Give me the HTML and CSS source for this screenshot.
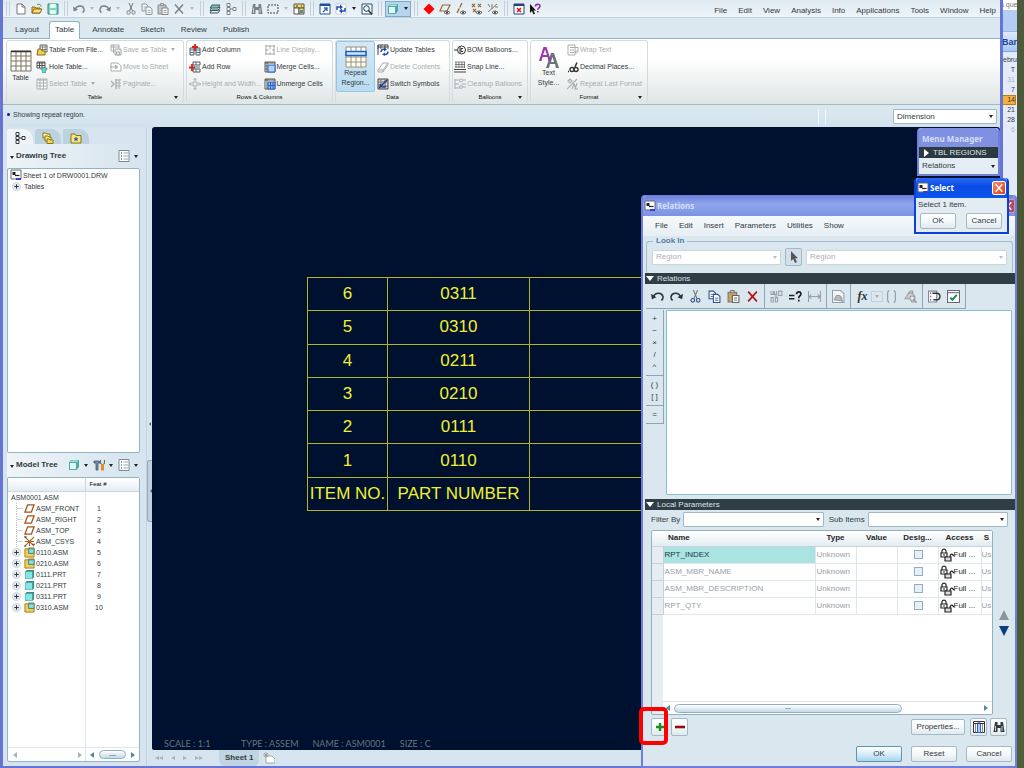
FILE: index.html
```html
<!DOCTYPE html>
<html lang="en">
<head>
    <meta charset="UTF-8">
    <meta name="viewport" content="width=device-width, initial-scale=1.0">
    <title>DRW0001 - Repeat Region Relations</title>
    <link rel="stylesheet" href="styles.css">
</head>
<body>
    <!-- icon sprite -->
    <svg class="sprite" aria-hidden="true">
        <symbol id="i-new" viewBox="0 0 12 12"><path d="M2 1h5l3 3v7H2z" fill="#fff" stroke="#777"/><path d="M7 1v3h3" fill="none" stroke="#777"/></symbol>
        <symbol id="i-open" viewBox="0 0 12 12"><path d="M1 10V4h3l1 1h4v5z" fill="#e8c64a" stroke="#8a6a10"/><path d="M1 10l2-4h8l-2 4z" fill="#f8e27a" stroke="#8a6a10"/><path d="M6 2c2-1.500 4-.5 4 1.500" fill="none" stroke="#3c8a3c"/></symbol>
        <symbol id="i-save" viewBox="0 0 12 12"><path d="M1 1h10v10H1z" fill="#7fd0c8" stroke="#3d7f86"/><path d="M3 1h6v4H3zM3 7h6v4H3z" fill="#f6fbfb" stroke="#6fa"  stroke-width=".4"/></symbol>
        <symbol id="i-undo" viewBox="0 0 12 12"><path d="M2 6.500C4 2 10 2 11 6c.3 1.800-.5 3-1.500 3.500" fill="none" stroke="currentColor" stroke-width="1.400"/><path d="M0 3.500l.8 5 4.200-1.800z" fill="currentColor"/></symbol>
        <symbol id="i-redo" viewBox="0 0 12 12"><path d="M10 6.500C8 2 2 2 1 6c-.3 1.800.5 3 1.500 3.500" fill="none" stroke="currentColor" stroke-width="1.400"/><path d="M12 3.500l-.8 5L7 6.700z" fill="currentColor"/></symbol>
        <symbol id="i-cut" viewBox="0 0 12 12"><path d="M4 0l3.500 8M8 0L4.500 8" fill="none" stroke="#777"/><circle cx="3.500" cy="9.500" r="1.700" fill="none" stroke="currentColor"/><circle cx="8.500" cy="9.500" r="1.700" fill="none" stroke="currentColor"/></symbol>
        <symbol id="i-copy" viewBox="0 0 12 12"><path d="M1 1h4l2 2v5H1z" fill="#fff" stroke="currentColor"/><path d="M5 4h4l2 2v5.500H5z" fill="#fff" stroke="currentColor"/><path d="M2.500 4h3M2.500 6h2M6.500 7.500h3M6.500 9.500h3" stroke="currentColor" stroke-width=".8"/></symbol>
        <symbol id="i-paste" viewBox="0 0 12 12"><path d="M1 2h8v9H1z" fill="var(--board,#bbb)" stroke="#777"/><path d="M3.500.5h3v2h-3z" fill="#ddd" stroke="#777"/><path d="M5 5h6v6.500H5z" fill="#fff" stroke="#666"/><path d="M6.500 7.500h3M6.500 9.500h3" stroke="#888"/></symbol>
        <symbol id="i-x" viewBox="0 0 12 12"><path d="M2 1.500l8 9M10 1.500l-8 9" stroke="currentColor" stroke-width="1.500"/></symbol>
        <symbol id="i-layers" viewBox="0 0 12 12"><path d="M1 10l2-3h8l-2 3zM1 7.500l2-3h8l-2 3z" fill="#d7efe8" stroke="#456"/><path d="M1 5l2-3h8L9 5z" fill="#6fc9b5" stroke="#456"/></symbol>
        <symbol id="i-nodes" viewBox="0 0 12 12"><path d="M3.500 3v6M4.500 6H8" stroke="currentColor"/><path d="M2 .5h3v3H2zM2 4.500h3v3H2zM2 8.500h3v3H2zM8 4.500h3v3H8z" fill="#fff" stroke="currentColor"/></symbol>
        <symbol id="i-find" viewBox="0 0 12 12"><path d="M2 1h2.500v3h3V1H10l1.500 10H7.500V7h-3v4H.5z" fill="currentColor"/><path d="M2.500 5v5M9 5v5" stroke="#ccc"/></symbol>
        <symbol id="i-marquee" viewBox="0 0 12 12"><path d="M1 2h10v8H1z" fill="none" stroke="#444" stroke-dasharray="2 1"/></symbol>
        <symbol id="i-model" viewBox="0 0 12 12"><path d="M1 1h10v4H1z" fill="#f5df5a" stroke="#555"/><path d="M1 5h5v6H1z" fill="#fff" stroke="#555"/><path d="M6 5h5v6H6z" fill="#f0d850" stroke="#555"/><path d="M3 3h2M8 3h1" stroke="#333"/><path d="M7 7h3v3H7z" fill="#58b"/></symbol>
        <symbol id="i-window" viewBox="0 0 12 12"><path d="M1 1h10v10H1z" fill="#fff" stroke="#224e9a"/><path d="M1 2h10" stroke="#224e9a" stroke-width="2"/><path d="M4 9l4-4M8 8V5H5" fill="none" stroke="#2563c4" stroke-width="1.300"/></symbol>
        <symbol id="i-refresh" viewBox="0 0 12 12"><path d="M1 1h10v10H1z" fill="#fff" stroke="#ccd"/><path d="M2 7V4h3M10 5v3H7" fill="none" stroke="#1d4fb4" stroke-width="1.500"/><path d="M5 1.500l3 2.500-3 2.500zM7 5.500L4 8l3 2.500z" fill="#1d4fb4"/></symbol>
        <symbol id="i-zoom" viewBox="0 0 12 12"><path d="M1 1h10v10H1z" fill="#fff" stroke="#224e7a"/><circle cx="5.500" cy="5.500" r="2.800" fill="#dff" stroke="#333"/><path d="M7.500 7.500l3.500 4" stroke="#333" stroke-width="1.500"/></symbol>
        <symbol id="i-cube" viewBox="0 0 12 12"><path d="M1 3.500L3 1h8v7l-2 2.500H1z" fill="#4fa9a6"/><path d="M1.500 3.500h7v7h-7z" fill="#d8fbf8" stroke="#4e8a8a" stroke-width=".7"/><path d="M2 3l1.500-1.500h7L9 3z" fill="#a5ebe6"/></symbol>
        <symbol id="i-diamond" viewBox="0 0 12 12"><path d="M6 .5L11.500 6 6 11.500.5 6z" fill="#f00"/></symbol>
        <symbol id="i-dplane" viewBox="0 0 12 12"><path d="M3.500 2H11L8 8H1z" fill="none" stroke="#9a6a30" stroke-width="1.200"/><path d="M5 9.500c2-2 4-2 6 0-2 2-4 2-6 0z" fill="#eee" stroke="#555"/><circle cx="8" cy="9.500" r="1" fill="#333"/></symbol>
        <symbol id="i-daxis" viewBox="0 0 12 12"><path d="M7 0L2 10" stroke="#9a6a30" stroke-width="1.300" stroke-dasharray="5 1"/><path d="M5 9.500c2-2 4-2 6 0-2 2-4 2-6 0z" fill="#eee" stroke="#555"/><circle cx="8" cy="9.500" r="1" fill="#333"/></symbol>
        <symbol id="i-dpoint" viewBox="0 0 12 12"><path d="M1 1l3 3M4 1L1 4M7 1l3 3M10 1L7 4M2 6l3 3M5 6L2 9" stroke="#9a6a30" stroke-width="1.200"/><path d="M5 9.500c2-2 4-2 6 0-2 2-4 2-6 0z" fill="#eee" stroke="#555"/><circle cx="8" cy="9.500" r="1" fill="#333"/></symbol>
        <symbol id="i-dcsys" viewBox="0 0 12 12"><path d="M10 1L1 9M5 1v5M1 1l2 3M8 4h3" stroke="#8a7a60"/><path d="M5 9.500c2-2 4-2 6 0-2 2-4 2-6 0z" fill="#eee" stroke="#555"/><circle cx="8" cy="9.500" r="1" fill="#333"/></symbol>
        <symbol id="i-close" viewBox="0 0 12 12"><path d="M1 1h10v10H1z" fill="#fff" stroke="#27407c"/><path d="M1 2h10" stroke="#27407c" stroke-width="2"/><path d="M4 5l4 4M8 5L4 9" stroke="#d11" stroke-width="1.500"/></symbol>
        <symbol id="i-help" viewBox="0 0 12 12"><path d="M1 1v9l2-2 1.500 3.500 1.500-.7L4.500 7.500H7z" fill="#111"/><path d="M6.500 3.500C6.500.5 11 .5 11 3c0 2-2.200 1.800-2.200 3.800M8.800 8v1.500" fill="none" stroke="#8a2aa0" stroke-width="1.600"/></symbol>

        <symbol id="i-grid" viewBox="0 0 22 22"><path d="M1 1h20v20H1z" fill="#fffdf4"/><path d="M1 6h20M1 11h20M1 16h20M1 21h20M6 1v20M11 1v20M16 1v20M21 1v20M1 1v20M1 1h20" stroke="#77756a"/><path d="M1 1.500h20" stroke="#333" stroke-width="1.500"/></symbol>
        <symbol id="i-region" viewBox="0 0 22 22"><path d="M1 1h20v20H1z" fill="#fffdf4"/><path d="M1 1h20M1 11h20M1 16h20M1 21h20M6 1v20M11 1v20M16 1v20M21 1v20M1 1v20" stroke="#9a9376"/><path d="M1 5.500h20v4H1z" fill="#cfe8ff" stroke="#1c62c8" stroke-width="1.500"/></symbol>
        <symbol id="i-style" viewBox="0 0 22 22"><path d="M8 22l5-15h3l5 15h-3l-1-4h-5l-1 4zM13 16h3l-1.500-5z" fill="#6b737a"/><path d="M1 15L5.500 1h3L13 15h-2.500l-1-4h-5l-1 4zM5 9h4L7 3.500z" fill="#9a35b0"/></symbol>
        <symbol id="i-tfile" viewBox="0 0 12 12"><path d="M4 1h7v7H4z" fill="#fff" stroke="#666"/><path d="M4 3h7M4 5.500h7M6.500 1v7M9 1v7" stroke="#666" stroke-width=".7"/><path d="M1 11l1-6h3l1 2h3v4z" fill="#f2cf4e" stroke="#8a6a10"/></symbol>
        <symbol id="i-thole" viewBox="0 0 12 12"><path d="M1 1h8v6H1z" fill="#fff" stroke="#555"/><path d="M1 2h8M1 4.500h8M3.500 1v6M6 1v6" stroke="#555"/><path d="M5 7h6v2H9.500v3h-3V9H5z" fill="#63d6c9" stroke="#3a8a88" stroke-width=".6"/></symbol>
        <symbol id="i-tsel" viewBox="0 0 12 12"><path d="M1 1h10v10H1z" fill="#fff" stroke="currentColor"/><path d="M1 2h10M1 5h10M1 8h10M4 1v10M7.500 1v10" stroke="currentColor"/></symbol>
        <symbol id="i-tsave" viewBox="0 0 12 12"><path d="M1 1h8v6H1zM1 3h8M3.500 1v8" fill="none" stroke="currentColor"/><path d="M5 5h6v6H5zM6.500 8h3v3h-3z" fill="#eee" stroke="currentColor"/></symbol>
        <symbol id="i-move" viewBox="0 0 12 12"><path d="M1 2h7l3 3v5H1z" fill="#fff" stroke="currentColor"/><path d="M0 6h6" stroke="currentColor"/><path d="M5 3.500L8.500 6 5 8.500z" fill="currentColor"/></symbol>
        <symbol id="i-pag" viewBox="0 0 12 12"><path d="M1 3l3 3-3 3M6 1v10" fill="none" stroke="currentColor" stroke-width="1.400"/><path d="M6 2h5M6 5h5M6 8h5M9 1v10" stroke="currentColor"/></symbol>
        <symbol id="i-addcol" viewBox="0 0 12 12"><path d="M1 4h4v7H1zM7 4h4v7H7z" fill="#fff" stroke="#555"/><path d="M1 6h4M1 8.500h4M7 6h4M7 8.500h4" stroke="#37a" /><path d="M6 0v7M3 3h6" stroke="#d21" stroke-width="1.800"/></symbol>
        <symbol id="i-addrow" viewBox="0 0 12 12"><path d="M4 1h7v3H4zM4 8h7v3H4z" fill="#fff" stroke="#555"/><path d="M7 1v3M7 8v3M5 6h6" stroke="#37a"/><path d="M3 3v7M0 6.500h6" stroke="#d21" stroke-width="1.800"/></symbol>
        <symbol id="i-size" viewBox="0 0 12 12"><path d="M4 4h4v4H4zM6 0v3M6 9v3M0 6h3M9 6h3M4.500 2L6 .5 7.500 2M4.500 10L6 11.500 7.500 10M2 4.500L.5 6 2 7.500M10 4.500L11.500 6 10 7.500" fill="none" stroke="currentColor"/></symbol>
        <symbol id="i-lined" viewBox="0 0 12 12"><path d="M1 2h10M1 10h10M2 1v10M10 1v10M6 1v4M1 6h4M8 6h3M6 8v3" stroke="currentColor"/></symbol>
        <symbol id="i-merge" viewBox="0 0 12 12"><path d="M1 1h10v10H1z" fill="#fff" stroke="#555"/><path d="M1 2h10M3 1v10M1 5h2M1 8h2" stroke="#555"/><path d="M4 4h7v7H4z" fill="#b6d2fa" stroke="#2b63c4"/></symbol>
        <symbol id="i-unmerge" viewBox="0 0 12 12"><path d="M1 1h10v10H1z" fill="#fff" stroke="#555"/><path d="M1 2h10M3 1v10" stroke="#555"/><path d="M4 4h7v7H4zM4 7.500h7M6.500 4v7M9 4v7" fill="#8fb8f6" stroke="#2b63c4"/></symbol>
        <symbol id="i-update" viewBox="0 0 12 12"><path d="M1 5V1h10v4M1 3h10M4 1v4M8 1v4M1 1v10" fill="none" stroke="#444"/><path d="M4 8c0-2 1.500-3 3-2.500M11 7.500c0 2-1.500 3-3 3" fill="none" stroke="#1d4fb4" stroke-width="1.500"/><path d="M7 3.500l3 2-3 2zM8 8.500l-3 2 3 1.500z" fill="#1d4fb4"/></symbol>
        <symbol id="i-erase" viewBox="0 0 12 12"><path d="M1 9l5-7h5L6 9zM1 9v2h5l5-7V2M6 9v2" fill="#fff" stroke="currentColor"/></symbol>
        <symbol id="i-switch" viewBox="0 0 12 12"><path d="M1 1h10v10H1z" fill="#cfd6de" stroke="#444"/><path d="M1 4h10M1 8h10M4 1v10M8 1v10" stroke="#777"/><path d="M2 10l8-8M3 6c0 3 4 4 6 2" fill="none" stroke="#24367e" stroke-width="1.500"/></symbol>
        <symbol id="i-bom" viewBox="0 0 12 12"><path d="M0 6h3" stroke="#333"/><circle cx="7.500" cy="6" r="4" fill="#fff" stroke="#333"/><path d="M9 4.500H7v3h2M6 3v6" fill="none" stroke="#333"/></symbol>
        <symbol id="i-snap" viewBox="0 0 12 12"><path d="M1 1h10M1 3.500h10M1 6h10M2 1v6M5 1v6M8 1v6M10.500 1v6" stroke="#666" stroke-width=".8"/><path d="M0 8.500h12M0 11h12" stroke="#444"/></symbol>
        <symbol id="i-clean" viewBox="0 0 12 12"><path d="M1 1v10M1 2h4M1 6h4M1 10h4" stroke="currentColor"/><circle cx="7" cy="2.500" r="1.500" fill="none" stroke="currentColor"/><circle cx="7" cy="9" r="1.500" fill="none" stroke="currentColor"/><path d="M8 6h4M9 2h3M9 9h3" stroke="currentColor"/></symbol>
        <symbol id="i-wrap" viewBox="0 0 12 12"><path d="M1 1h7v10H1zM3 3.500h6M3 6h4M3 8.500h4" fill="none" stroke="currentColor"/><path d="M8 3.500h3V8H8M9.500 6.500L8 8l1.500 1.500" fill="none" stroke="currentColor"/></symbol>
        <symbol id="i-dec" viewBox="0 0 12 12"><circle cx="5" cy="8.500" r="2" fill="none" stroke="#333" stroke-width="1.400"/><circle cx="9" cy="8.500" r="2" fill="none" stroke="#333" stroke-width="1.400"/><path d="M8 6l2-4.500M1 10.500h1" stroke="#333" stroke-width="1.500"/></symbol>
        <symbol id="i-fmt" viewBox="0 0 12 12"><path d="M0 11L10 1M1 3l2-2 2 2-2 2zM5 11l2-5 2 5M10 5l-2 6h3" fill="none" stroke="currentColor" stroke-width="1.200"/></symbol>

        <symbol id="i-folders" viewBox="0 0 12 12"><path d="M1 1h3l1 1h3v4H1z" fill="#fff3a0" stroke="#8a7420"/><path d="M3 4h3l1 1h2v4H3z" fill="#fbe66e" stroke="#8a7420"/><path d="M5 7h2l1 1h3v3.500H5z" fill="#f5d94c" stroke="#8a7420"/></symbol>
        <symbol id="i-fav" viewBox="0 0 12 12"><path d="M1 2h4l1 1.500h5V11H1z" fill="#fbe66e" stroke="#8a7420"/><path d="M6 4.500l.8 1.700h1.700L7.200 7.400l.6 1.800L6 8.200 4.200 9.200l.6-1.800-1.300-1.200h1.700z" fill="#2b50c8"/></symbol>
        <symbol id="i-list" viewBox="0 0 12 12"><path d="M1 .5h10v11H1z" fill="#fff" stroke="#7b8b96"/><path d="M3 3h1M3 6h1M3 9h1" stroke="#333" stroke-width="1.200"/><path d="M5.500 3H10M5.500 6H10M5.500 9H10" stroke="#99a7b0"/></symbol>
        <symbol id="i-drw" viewBox="0 0 12 12"><path d="M1 1h10v9H1z" fill="#fff" stroke="#667"/><path d="M2.500 3h3v3h-3z" fill="#222"/><path d="M5 6.500h4.500" stroke="#222" stroke-width="1.200"/><path d="M6 10h5" stroke="#3b3bd8" stroke-width="2"/></symbol>
        <symbol id="i-plus" viewBox="0 0 12 12"><circle cx="6" cy="6" r="5.500" fill="#dfe8ee" stroke="#c4d0da"/><path d="M3 6h6M6 3v6" stroke="#333" stroke-width="1.300"/></symbol>
        <symbol id="i-plane" viewBox="0 0 12 12"><path d="M4 2h7L8 10H1z" fill="#fff" stroke="#a4521c" stroke-width="1.400"/></symbol>
        <symbol id="i-csys" viewBox="0 0 12 12"><path d="M1 1l10 10M11 1L1 11M1 6h10M6 6v5" stroke="#a4621c" stroke-width="1.200"/><path d="M0 1h3M0 11h2M9 9h3" stroke="#333"/></symbol>
        <symbol id="i-asm" viewBox="0 0 12 12"><path d="M1 2h4V1h6v10H1z" fill="#f1cf55" stroke="#a0781c"/><path d="M5 2h6v5H5z" fill="#86e3df" stroke="#3a8080"/></symbol>
        <symbol id="i-prt" viewBox="0 0 12 12"><path d="M1 3l2-2h8v8l-2 2H1z" fill="#3c8d8d"/><path d="M1.500 3h7.500v7.500H1.500z" fill="#84e6e4"/></symbol>
        <symbol id="i-tools" viewBox="0 0 12 12"><path d="M1 2h5l1.500 2H5v7H3V4H1z" fill="#6d8fb8" stroke="#456" stroke-width=".8"/><path d="M7.500 1v3l1 1.500M11.500 1v3l-1 1.500" fill="none" stroke="#666" stroke-width="1.200"/><path d="M8 5h3v6.500H8z" fill="#e88a2a"/></symbol>
        <symbol id="i-sheet" viewBox="0 0 12 12"><path d="M3 4h6l3 3v4H3z" fill="#fff" stroke="#9aa"/><path d="M3 0v6M0 3h6M1 1l4 4M5 1L1 5" stroke="#999" stroke-width=".8"/></symbol>

        <symbol id="i-arrow" viewBox="0 0 12 12"><path d="M3 0v10l2.300-2L7 12l2-1-1.800-3.700H10z" fill="#555" /></symbol>
        <symbol id="i-units" viewBox="0 0 12 12"><path d="M1 1v3h2V1M4 1v3h2V1M1 7v4h2V7zM5 7v4h2V7zM4 5.500h3M8 1h3v4H8z" fill="none" stroke="currentColor"/></symbol>
        <symbol id="i-eq" viewBox="0 0 12 12"><path d="M0 5h5M0 8h5" stroke="#222" stroke-width="1.400"/><path d="M7 4c0-3 4-3 4-.5 0 2-2 2-2 4M9 9v1.500" fill="none" stroke="#222" stroke-width="1.600"/></symbol>
        <symbol id="i-dim" viewBox="0 0 12 12"><path d="M.5 1v10M11.500 1v10M1 6h10M3 4L1 6l2 2M9 4l2 2-2 2" fill="none" stroke="currentColor"/></symbol>
        <symbol id="i-shape" viewBox="0 0 12 12"><path d="M1 8l3-5h4l2 3v5H7L6 8zM4 3L6 1h2v3" fill="#ccc" stroke="currentColor"/><circle cx="7.500" cy="7.500" r="2" fill="#eee" stroke="currentColor"/><path d="M9 9l3 3" stroke="currentColor" stroke-width="1.400"/></symbol>
        <symbol id="i-sheetshape" viewBox="0 0 12 12"><path d="M.5.5H8l3 3v8H.5z" fill="#f4f6f7" stroke="currentColor"/><path d="M2 9l2-4h3l2 2v3z" fill="#bbb" stroke="currentColor"/><path d="M8 8l3 4" stroke="currentColor"/></symbol>
        <symbol id="i-paren" viewBox="0 0 12 12"><path d="M4 .5C1.500 1 2.500 5 2.500 6s-1 5 1.500 5.500M8 .5C10.500 1 9.500 5 9.500 6s1 5-1.500 5.500" fill="none" stroke="currentColor" stroke-width="1.200"/></symbol>
        <symbol id="i-sort" viewBox="0 0 12 12"><path d="M.5 1H8v10H.5z" fill="#fff" stroke="#789"/><path d="M2 3h1M2 9h1" stroke="#d22" stroke-width="1.500"/><path d="M2 6h1" stroke="#26c" stroke-width="1.500"/><path d="M4 3h4c4 0 4 6 0 6H5" fill="none" stroke="#333" stroke-width="1.300"/></symbol>
        <symbol id="i-verify" viewBox="0 0 12 12"><path d="M.5.5h11v11H.5z" fill="#fff" stroke="#667"/><path d="M.5 2.500h11" stroke="#667"/><path d="M3 7l2 2 4-4.500" fill="none" stroke="#178a50" stroke-width="1.800"/></symbol>
        <symbol id="i-lock" viewBox="0 0 16 14"><path d="M1 5h6v4H1zM2 5V3c0-2.500 4-2.500 4 0v2" fill="#fff" stroke="#222" stroke-width="1.200"/><path d="M3 7h2" stroke="#222"/><path d="M5 9h6v4H5z" fill="#ddd" stroke="#222" stroke-width="1.200"/><path d="M10 9c0-3 2-3.500 3-2l1 1" fill="none" stroke="#222" stroke-width="1.300"/></symbol>
        <symbol id="i-cols" viewBox="0 0 12 12"><path d="M.5.5h11v11H.5z" fill="#fff" stroke="#333"/><path d="M2.500 2.500v9M9.500 2.500v9" stroke="#888"/><path d="M4.500 2h3v9.500h-3z" fill="#a9ccf8" stroke="#2b63c4"/><path d="M.5 2.500h11" stroke="#333" /></symbol>
        <symbol id="i-add" viewBox="0 0 12 12"><path d="M6 2v8M2 6h8" stroke="#189018" stroke-width="2.400"/></symbol>
        <symbol id="i-remove" viewBox="0 0 12 12"><path d="M1 6h10" stroke="#901010" stroke-width="2.600"/></symbol>
    </svg>

    <!-- calendar gadget peeking out behind the main window -->
    <div class="gadget">
        <div class="gadget-top">a que</div>
        <div class="gadget-band"></div>
        <div class="gadget-name">Bar</div>
        <div class="gadget-month">ebru</div>
        <div class="gadget-day">T</div>
        <div class="gadget-day dim">31</div>
        <div class="gadget-day">7</div>
        <div class="gadget-day today">14</div>
        <div class="gadget-day">21</div>
        <div class="gadget-day">28</div>
        <div class="gadget-day dim">6</div>
    </div>

    <div class="app">
        <header class="quickbar">
            <div class="quick-tools">
                <span class="sep"></span>
                <button title="New"><svg><use href="#i-new"/></svg></button>
                <button title="Open"><svg><use href="#i-open"/></svg></button>
                <button title="Save"><svg><use href="#i-save"/></svg></button>
                <span class="sep"></span>
                <button title="Undo"><svg><use href="#i-undo"/></svg></button><i class="caret off"></i>
                <button title="Redo"><svg><use href="#i-redo"/></svg></button><i class="caret off"></i>
                <button title="Cut"><svg><use href="#i-cut"/></svg></button>
                <button class="off" title="Copy"><svg><use href="#i-copy"/></svg></button>
                <button class="off" title="Paste"><svg><use href="#i-paste"/></svg></button>
                <button title="Delete"><svg><use href="#i-x"/></svg></button><i class="caret off"></i>
                <span class="sep"></span>
                <button title="Layers"><svg><use href="#i-layers"/></svg></button>
                <button title="Tree"><svg><use href="#i-nodes"/></svg></button>
                <span class="sep"></span>
                <button title="Find"><svg><use href="#i-find"/></svg></button>
                <button title="Select"><svg><use href="#i-marquee"/></svg></button><i class="caret off"></i>
                <button title="Models"><svg><use href="#i-model"/></svg></button>
                <span class="sep"></span>
                <button title="Windows"><svg><use href="#i-window"/></svg></button>
                <button title="Refresh"><svg><use href="#i-refresh"/></svg></button><i class="caret"></i>
                <button title="Zoom"><svg><use href="#i-zoom"/></svg></button>
                <span class="sep"></span>
                <span class="pressed"><button title="Display style"><svg><use href="#i-cube"/></svg></button><i class="caret"></i></span>
                <span class="sep"></span>
                <button title="Spin centre"><svg><use href="#i-diamond"/></svg></button>
                <button title="Planes"><svg><use href="#i-dplane"/></svg></button>
                <button title="Axes"><svg><use href="#i-daxis"/></svg></button>
                <button title="Points"><svg><use href="#i-dpoint"/></svg></button>
                <button title="Csys"><svg><use href="#i-dcsys"/></svg></button>
                <span class="sep"></span>
                <button title="Close"><svg><use href="#i-close"/></svg></button>
                <button title="Help"><svg><use href="#i-help"/></svg></button>
            </div>
            <nav class="menu">
                <a href="#">File</a><a href="#">Edit</a><a href="#">View</a><a href="#">Analysis</a><a href="#">Info</a><a href="#">Applications</a><a href="#">Tools</a><a href="#">Window</a><a href="#">Help</a>
            </nav>
        </header>

        <nav class="tabs">
            <a href="#">Layout</a><a href="#" class="active">Table</a><a href="#">Annotate</a><a href="#">Sketch</a><a href="#">Review</a><a href="#">Publish</a>
        </nav>

        <div class="ribbon">
            <section class="group g-table">
                <div class="group-body">
                    <button class="big"><svg><use href="#i-grid"/></svg>Table</button>
                    <div class="cmds">
                        <button><svg><use href="#i-tfile"/></svg>Table From File...</button>
                        <button><svg><use href="#i-thole"/></svg>Hole Table...</button>
                        <button disabled><svg><use href="#i-tsel"/></svg>Select Table<i class="caret off"></i></button>
                    </div>
                    <div class="cmds">
                        <button disabled><svg><use href="#i-tsave"/></svg>Save as Table<i class="caret off"></i></button>
                        <button disabled><svg><use href="#i-move"/></svg>Move to Sheet</button>
                        <button disabled><svg><use href="#i-pag"/></svg>Paginate...</button>
                    </div>
                </div>
                <div class="group-label">Table<i class="caret"></i></div>
            </section>
            <section class="group g-rows">
                <div class="group-body">
                    <div class="cmds">
                        <button><svg><use href="#i-addcol"/></svg>Add Column</button>
                        <button><svg><use href="#i-addrow"/></svg>Add Row</button>
                        <button disabled><svg><use href="#i-size"/></svg>Height and Width...</button>
                    </div>
                    <div class="cmds">
                        <button disabled><svg><use href="#i-lined"/></svg>Line Display...</button>
                        <button><svg><use href="#i-merge"/></svg>Merge Cells...</button>
                        <button><svg><use href="#i-unmerge"/></svg>Unmerge Cells</button>
                    </div>
                </div>
                <div class="group-label">Rows &amp; Columns</div>
            </section>
            <section class="group g-data">
                <div class="group-body">
                    <button class="big selected"><svg><use href="#i-region"/></svg>Repeat<br>Region...</button>
                    <div class="cmds">
                        <button><svg><use href="#i-update"/></svg>Update Tables</button>
                        <button disabled><svg><use href="#i-erase"/></svg>Delete Contents</button>
                        <button><svg><use href="#i-switch"/></svg>Switch Symbols</button>
                    </div>
                </div>
                <div class="group-label">Data</div>
            </section>
            <section class="group g-balloons">
                <div class="group-body">
                    <div class="cmds">
                        <button><svg><use href="#i-bom"/></svg>BOM Balloons...</button>
                        <button><svg><use href="#i-snap"/></svg>Snap Line...</button>
                        <button disabled><svg><use href="#i-clean"/></svg>Cleanup Balloons</button>
                    </div>
                </div>
                <div class="group-label">Balloons<i class="caret"></i></div>
            </section>
            <section class="group g-format">
                <div class="group-body">
                    <button class="big"><svg><use href="#i-style"/></svg>Text<br>Style...</button>
                    <div class="cmds">
                        <button disabled><svg><use href="#i-wrap"/></svg>Wrap Text</button>
                        <button><svg><use href="#i-dec"/></svg>Decimal Places...</button>
                        <button disabled><svg><use href="#i-fmt"/></svg>Repeat Last Format</button>
                    </div>
                </div>
                <div class="group-label">Format<i class="caret"></i></div>
            </section>
        </div>

        <div class="message-bar">
            <span class="dot"></span>
            <span class="message">Showing repeat region.</span>
            <span class="divider"></span>
            <span class="select filter"><select aria-label="Selection filter"><option>Dimension</option></select></span>
        </div>

        <div class="workspace">
            <aside class="sidebar">
                <div class="panels">
                    <div class="side-tabs">
                        <button class="active" title="Model tree"><svg><use href="#i-nodes"/></svg></button>
                        <button title="Folder browser"><svg><use href="#i-folders"/></svg></button>
                        <button title="Favorites"><svg><use href="#i-fav"/></svg></button>
                    </div>
                    <div class="panel-head">
                        <i class="caret"></i><h2>Drawing Tree</h2>
                        <span class="panel-tools"><svg><use href="#i-list"/></svg><i class="caret"></i></span>
                    </div>
                    <div class="tree-box">
                        <ul class="drawing-tree">
                            <li><svg><use href="#i-drw"/></svg>Sheet 1 of DRW0001.DRW</li>
                            <li><svg class="plus"><use href="#i-plus"/></svg>Tables</li>
                        </ul>
                    </div>
                    <div class="panel-head">
                        <i class="caret"></i><h2>Model Tree</h2>
                        <span class="panel-tools"><svg><use href="#i-cube"/></svg><i class="caret"></i><svg><use href="#i-tools"/></svg><i class="caret"></i><svg><use href="#i-list"/></svg><i class="caret"></i></span>
                    </div>
                    <div class="tree-box model-box">
                        <table class="model-tree">
                            <thead><tr><th></th><th>Feat #</th></tr></thead>
                            <tbody>
                                <tr class="root"><td>ASM0001.ASM</td><td></td></tr>
                                <tr><td><span class="node"><i class="twig"></i><svg><use href="#i-plane"/></svg>ASM_FRONT</span></td><td>1</td></tr>
                                <tr><td><span class="node"><i class="twig"></i><svg><use href="#i-plane"/></svg>ASM_RIGHT</span></td><td>2</td></tr>
                                <tr><td><span class="node"><i class="twig"></i><svg><use href="#i-plane"/></svg>ASM_TOP</span></td><td>3</td></tr>
                                <tr><td><span class="node"><i class="twig"></i><svg><use href="#i-csys"/></svg>ASM_CSYS</span></td><td>4</td></tr>
                                <tr><td><span class="node"><svg class="plus"><use href="#i-plus"/></svg><svg><use href="#i-asm"/></svg>0110.ASM</span></td><td>5</td></tr>
                                <tr><td><span class="node"><svg class="plus"><use href="#i-plus"/></svg><svg><use href="#i-asm"/></svg>0210.ASM</span></td><td>6</td></tr>
                                <tr><td><span class="node"><svg class="plus"><use href="#i-plus"/></svg><svg><use href="#i-prt"/></svg>0111.PRT</span></td><td>7</td></tr>
                                <tr><td><span class="node"><svg class="plus"><use href="#i-plus"/></svg><svg><use href="#i-prt"/></svg>0211.PRT</span></td><td>8</td></tr>
                                <tr><td><span class="node"><svg class="plus"><use href="#i-plus"/></svg><svg><use href="#i-prt"/></svg>0311.PRT</span></td><td>9</td></tr>
                                <tr><td><span class="node"><svg class="plus"><use href="#i-plus"/></svg><svg><use href="#i-asm"/></svg>0310.ASM</span></td><td>10</td></tr>
                            </tbody>
                        </table>
                        <div class="tree-scroll">
                            <span class="scroll-a"><i class="tri left off"></i><i class="tri right off"></i></span>
                            <span class="scroll-b"><i class="tri left"></i><span class="thumb">—</span><i class="tri right"></i></span>
                        </div>
                    </div>
                </div>
                <div class="splitter">
                    <div class="grip-area"><i class="tri left"></i></div>
                    <div class="grip"><i class="tri left"></i></div>
                    <div class="grip-rest"></div>
                </div>
            </aside>

            <main class="drawing">
                <div class="canvas">
                    <table class="bom">
                        <tr><td>6</td><td>0311</td><td></td></tr>
                        <tr><td>5</td><td>0310</td><td></td></tr>
                        <tr><td>4</td><td>0211</td><td></td></tr>
                        <tr><td>3</td><td>0210</td><td></td></tr>
                        <tr><td>2</td><td>0111</td><td></td></tr>
                        <tr><td>1</td><td>0110</td><td></td></tr>
                        <tr><td>ITEM NO.</td><td>PART NUMBER</td><td></td></tr>
                    </table>
                    <div class="sheet-info"><span class="scale">SCALE : 1:1</span><span>TYPE : ASSEM</span><span>NAME : ASM0001</span><span>SIZE : C</span></div>
                </div>
                <div class="sheet-bar">
                    <span class="pager"><i class="tri left off"></i><i class="tri left off"></i></span>
                    <i class="tri left off"></i><i class="tri right off"></i>
                    <span class="pager"><i class="tri right off"></i><i class="tri right off"></i></span>
                    <a href="#" class="sheet-tab">Sheet 1</a>
                    <svg><use href="#i-sheet"/></svg>
                </div>
            </main>
        </div>
    </div>

    <!-- floating windows -->
    <div class="menu-manager">
        <h2>Menu Manager</h2>
        <div class="mm-head"><i class="tri right"></i>TBL REGIONS</div>
        <div class="mm-item">Relations<i class="caret"></i></div>
    </div>

    <div class="relations">
        <div class="title-bar"><svg><use href="#i-drw"/></svg><h2>Relations</h2><button class="close faded" aria-label="Close"><svg><use href="#i-x"/></svg></button></div>
        <nav class="menu">
            <a href="#">File</a><a href="#">Edit</a><a href="#">Insert</a><a href="#">Parameters</a><a href="#">Utilities</a><a href="#">Show</a>
        </nav>
        <fieldset class="look-in">
            <legend>Look In</legend>
            <div class="look-row">
                <span class="select type"><select aria-label="Object type" disabled><option>Region</option></select></span>
                <button class="btn square" title="Pick"><svg><use href="#i-arrow"/></svg></button>
                <span class="select grow"><select aria-label="Object" disabled><option>Region</option></select></span>
            </div>
        </fieldset>
        <div class="section-bar"><i class="fold"></i>Relations</div>
        <div class="rel-tools">
            <div class="tool-set">
                <button title="Undo"><svg><use href="#i-undo"/></svg></button>
                <button title="Redo"><svg><use href="#i-redo"/></svg></button>
                <button class="blue" title="Cut"><svg><use href="#i-cut"/></svg></button>
                <button class="blue" title="Copy"><svg><use href="#i-copy"/></svg></button>
                <button class="tan" title="Paste"><svg><use href="#i-paste"/></svg></button>
                <button class="red" title="Delete"><svg><use href="#i-x"/></svg></button>
            </div>
            <div class="tool-set">
                <button class="off" title="Units"><svg><use href="#i-units"/></svg></button>
                <button title="Evaluate"><svg><use href="#i-eq"/></svg></button>
                <button class="off" title="Dimensions"><svg><use href="#i-dim"/></svg></button>
            </div>
            <div class="tool-set">
                <button class="off" title="Display"><svg><use href="#i-sheetshape"/></svg></button>
            </div>
            <div class="tool-set">
                <button class="fx" title="Function">fx</button><i class="caret off boxed"></i>
                <button class="off" title="Insert parameter"><svg><use href="#i-paren"/></svg></button>
                <button class="off" title="Look up"><svg><use href="#i-shape"/></svg></button>
            </div>
            <div class="tool-set">
                <button title="Sort"><svg><use href="#i-sort"/></svg></button>
                <button title="Verify"><svg><use href="#i-verify"/></svg></button>
            </div>
        </div>
        <div class="editor">
            <div class="operators">
                <div><button>+</button><button>−</button><button>×</button><button>/</button><button>^</button></div>
                <div><button>( )</button><button>[ ]</button></div>
                <div><button>=</button></div>
            </div>
            <textarea aria-label="Relations text"></textarea>
        </div>
        <div class="section-bar"><i class="fold"></i>Local Parameters</div>
        <div class="filter-row">
            <label for="filter-by">Filter By</label>
            <span class="select grow"><select id="filter-by"><option></option></select></span>
            <label for="sub-items">Sub Items</label>
            <span class="select grow"><select id="sub-items"><option></option></select></span>
        </div>
        <div class="params">
            <div class="param-box">
                <table class="param-table">
                    <thead>
                        <tr><th class="c-h"></th><th class="c-name">Name</th><th class="c-type">Type</th><th class="c-value">Value</th><th class="c-des">Desig...</th><th class="c-acc">Access</th><th>S</th></tr>
                    </thead>
                    <tbody>
                        <tr class="current"><td></td><td>RPT_INDEX</td><td>Unknown</td><td></td><td><input type="checkbox" aria-label="Designate RPT_INDEX"></td><td><span class="access"><svg><use href="#i-lock"/></svg>Full ...</span></td><td>Us</td></tr>
                        <tr><td></td><td>ASM_MBR_NAME</td><td>Unknown</td><td></td><td><input type="checkbox" aria-label="Designate ASM_MBR_NAME"></td><td><span class="access"><svg><use href="#i-lock"/></svg>Full ...</span></td><td>Us</td></tr>
                        <tr><td></td><td>ASM_MBR_DESCRIPTION</td><td>Unknown</td><td></td><td><input type="checkbox" aria-label="Designate ASM_MBR_DESCRIPTION"></td><td><span class="access"><svg><use href="#i-lock"/></svg>Full ...</span></td><td>Us</td></tr>
                        <tr><td></td><td>RPT_QTY</td><td>Unknown</td><td></td><td><input type="checkbox" aria-label="Designate RPT_QTY"></td><td><span class="access"><svg><use href="#i-lock"/></svg>Full ...</span></td><td>Us</td></tr>
                    </tbody>
                </table>
                <div class="param-scroll"><i class="tri left"></i><span class="thumb">--</span><i class="tri right"></i></div>
            </div>
            <div class="reorder">
                <button class="up" aria-label="Move up"></button>
                <button class="down" aria-label="Move down"></button>
            </div>
        </div>
        <div class="param-actions">
            <span class="callout-anchor"><button class="btn square" title="Add parameter"><svg><use href="#i-add"/></svg></button><span class="callout"></span></span>
            <button class="btn square" title="Delete parameter"><svg><use href="#i-remove"/></svg></button>
            <button class="btn props">Properties...</button>
            <button class="btn square" title="Columns"><svg><use href="#i-cols"/></svg></button>
            <button class="btn square" title="Find"><svg><use href="#i-find"/></svg></button>
        </div>
        <div class="dialog-actions">
            <button class="btn default">OK</button>
            <button class="btn">Reset</button>
            <button class="btn">Cancel</button>
        </div>
    </div>

    <div class="select-dialog">
        <div class="title-bar"><svg><use href="#i-drw"/></svg><h2>Select</h2><button class="close" aria-label="Close"><svg><use href="#i-x"/></svg></button></div>
        <p>Select 1 item.</p>
        <div class="select-actions"><button class="btn">OK</button><button class="btn">Cancel</button></div>
    </div>
</body>
</html>
```
FILE: styles.css
```css
* {
    box-sizing: border-box;
}
body {
    margin: 0;
    height: 100vh;
    overflow: hidden;
    position: relative;
    background: linear-gradient(#4d5a3c, #46552f 50%, #4f6038);
    font-family: "Liberation Sans", Arial, sans-serif;
    font-size: 8px;
    line-height: 12px;
    color: #333a40;
}
.sprite {
    display: none;
}
svg {
    width: 12px;
    height: 12px;
    flex: none;
    display: block;
}
button {
    font: inherit;
    color: inherit;
    background: none;
    border: 0;
    padding: 0;
    white-space: nowrap;
}
a {
    color: inherit;
    text-decoration: none;
}
h2, p, ul {
    margin: 0;
    padding: 0;
    font-size: 8px;
    list-style: none;
}

/* small shared bits */
.caret {
    flex: none;
    border: 2px solid transparent;
    border-top: 3px solid #222;
    border-bottom: 0;
    width: 4px;
    margin: 0 3px;
}
.caret.off {
    border-top-color: #a4adb3;
}
.tri {
    flex: none;
    width: 4px;
    height: 6px;
    border: 3px solid transparent;
}
.tri.left {
    border-left: 0;
    border-right: 4px solid #4d8c96;
}
.tri.right {
    border-right: 0;
    border-left: 4px solid #4d8c96;
}
.tri.left.off {
    border-right-color: #a3b4bd;
}
.tri.right.off {
    border-left-color: #a3b4bd;
}
.thumb {
    border: 1px solid #8eb0c2;
    border-radius: 5px;
    height: 9px;
    line-height: 6px;
    background: linear-gradient(#fff, #c3d9e6);
    text-align: center;
    color: #4a6a7a;
}
.select {
    position: relative;
    display: flex;
}
.select::after {
    content: "";
    position: absolute;
    right: 4px;
    top: 6px;
    border: 2px solid transparent;
    border-top: 3px solid #222;
    border-bottom: 0;
}
.select select {
    appearance: none;
    width: 100%;
    height: 15px;
    padding: 0 3px;
    border: 1px solid #9fb9c7;
    border-radius: 1px;
    background: #fff;
    font: inherit;
    color: #333a40;
}
.select select:disabled {
    color: #a9b1b6;
    border-color: #c8d6de;
    opacity: 1;
}
.select:has(select:disabled)::after {
    border-top-color: #bbb;
}
.btn {
    height: 16px;
    width: 46px;
    border: 1px solid #a3b9c6;
    border-radius: 2px;
    background: linear-gradient(#fff, #f4f8fa 50%, #dfe9ef);
    text-align: center;
}
.btn.square {
    width: 17px;
    height: 18px;
    display: flex;
    align-items: center;
    justify-content: center;
}
.btn.default {
    border-color: #5f94b4;
    background: linear-gradient(#fff, #d8edf9 50%, #a9d4ee);
}
.menu {
    display: flex;
    gap: 11px;
}

/* calendar gadget */
.gadget {
    position: absolute;
    top: 0;
    right: 7px;
    width: 17px;
    height: 200px;
    padding-right: 2px;
    background: #e3ebfb;
    overflow: hidden;
    text-align: right;
    font-size: 7px;
    line-height: 10px;
    white-space: nowrap;
}
.gadget-top {
    background: #fff;
    color: #777;
    margin-right: -2px;
}
.gadget-band {
    height: 22px;
    margin-right: -2px;
    background: #b5cdf4;
    border-bottom: 1px solid #9bb8e8;
}
.gadget-name {
    height: 20px;
    line-height: 21px;
    margin-right: -2px;
    background: linear-gradient(#dfeafb, #a8c6f2);
    border-bottom: 1px solid #7da4e2;
    font-size: 9px;
    font-weight: bold;
    color: #1b3f94;
}
.gadget-month {
    margin: 3px -2px 0 0;
}
.gadget-day.dim {
    color: #aab3c4;
}
.gadget-day.today {
    margin-right: -1px;
    padding-right: 1px;
    background: #f5b03c;
    outline: 1px solid #c07a18;
    outline-offset: -1px;
}

/* main window */
.app {
    display: flex;
    flex-direction: column;
    height: 100vh;
    margin-right: 21px;
    position: relative;
    border: solid #6674d3;
    border-width: 0 3px 2px;
    background: #d5e4ee;
}
.quickbar {
    display: flex;
    justify-content: space-between;
    height: 18px;
    flex: none;
    background: linear-gradient(#dfeaf2, #eef4f8);
    border-bottom: 1px solid #c3d3dd;
}
.quickbar .menu {
    padding: 5px 4px 0 0;
}
.quick-tools {
    display: flex;
    align-items: center;
    color: #7a8288;
}
.quick-tools button {
    width: 16px;
    height: 16px;
    padding: 2px;
}
.quick-tools .off {
    opacity: .8;
}
.sep {
    width: 4px;
    height: 15px;
    margin: 0 3px;
    border: solid #c3d0d9;
    border-width: 0 1px;
}
.pressed {
    display: flex;
    align-items: center;
    background: #b7d6ee;
    outline: 1px solid #7da9cb;
    outline-offset: -1px;
}
.tabs {
    display: flex;
    align-items: flex-end;
    height: 21px;
    flex: none;
    padding-left: 4px;
    background: #dbe8f0;
    border-bottom: 1px solid #8fb1c2;
}
.tabs a {
    height: 17px;
    padding: 2px 8px 0;
    border: solid transparent;
    border-width: 1px 0 0;
}
.tabs .active {
    height: 18px;
    margin: 0 4px -1px 2px;
    padding: 2px 5px 0;
    border: 1px solid #8fb1c2;
    border-bottom: 0;
    border-radius: 3px 3px 0 0;
    background: #fdfefe;
}
.ribbon {
    display: flex;
    gap: 2px;
    height: 66px;
    flex: none;
    padding: 1px 3px 1px;
    background: linear-gradient(#fff 30%, #dfe5e5);
    border-bottom: 1px solid #a3b9c4;
    font-size: 7px;
}
.group {
    display: flex;
    flex-direction: column;
    border: 1px solid #d3dbdf;
    border-bottom-color: transparent;
    border-radius: 3px;
}
.group-body {
    display: flex;
    height: 51px;
}
.group-label {
    position: relative;
    text-align: center;
    font-size: 6px;
    line-height: 10px;
    color: #111;
}
.group-label .caret {
    position: absolute;
    right: 2px;
    top: 4px;
}
.g-table {
    width: 178px;
}
.g-rows {
    width: 147px;
}
.g-data {
    width: 115px;
}
.g-balloons {
    width: 76px;
}
.g-format {
    width: 118px;
}
.cmds {
    display: grid;
    grid-template-rows: repeat(3, 17px);
    padding-left: 2px;
}
.g-table .cmds {
    width: 74px;
}
.g-rows .cmds {
    width: 80px;
}
.g-balloons .cmds, .g-format .cmds {
    padding-left: 1px;
}
.cmds button {
    display: flex;
    align-items: center;
    gap: 1px;
}
.cmds button:disabled {
    color: #a8adb0;
}
.big {
    display: flex;
    flex-direction: column;
    align-items: center;
    width: 27px;
    padding-top: 9px;
    line-height: 10px;
}
.big svg {
    width: 22px;
    height: 22px;
}
.big.selected, .g-format .big {
    width: 39px;
    padding-top: 4px;
}
.big.selected {
    border: 1px solid #9cc4e2;
    border-radius: 2px;
    background: linear-gradient(#d3e8f6, #b9dcf2);
}
.g-format .big {
    width: 35px;
    padding-top: 5px;
}
.g-table .big svg {
    margin-bottom: 1px;
}
.message-bar {
    display: flex;
    align-items: center;
    height: 22px;
    flex: none;
    padding: 1px 3px 0 4px;
    background: linear-gradient(#dce8ef, #d2e2ed);
}
.dot {
    width: 3px;
    height: 3px;
    margin: -4px 3px 0 0;
    border-radius: 50%;
    background: #1010c8;
}
.message {
    flex: 1;
    margin-top: -4px;
    font-size: 7px;
}
.divider {
    width: 8px;
    height: 16px;
    margin-right: 67px;
    border: solid #f2f7fa;
    border-width: 0 1px;
}
.filter {
    width: 104px;
}

/* sidebar */
.workspace {
    display: flex;
    flex: 1;
    min-height: 0;
}
.sidebar {
    display: flex;
    width: 149px;
}
.panels {
    display: flex;
    flex-direction: column;
    flex: 1;
    min-width: 0;
    padding: 2px 5px 4px 4px;
}
.side-tabs {
    display: flex;
    gap: 2px;
    height: 15px;
    flex: none;
}
.side-tabs button {
    width: 26px;
    padding: 2px 0 0 7px;
    background: #bdd2df;
    border-radius: 2px 10px 0 0;
}
.side-tabs .active {
    background: #eef4f8;
}
.panel-head {
    display: flex;
    align-items: center;
    height: 24px;
    flex: none;
    background: linear-gradient(90deg, #eef4f8, #d5e4ee);
}
.panel-head .caret {
    margin: 2px 2px 0 3px;
}
.panel-tools {
    display: flex;
    align-items: center;
    margin-left: auto;
    gap: 2px;
}
.panel-tools .caret {
    margin: 0 3px 0 2px;
}
.tree-box {
    display: flex;
    flex-direction: column;
    flex: 1 1 0;
    min-height: 0;
    margin-right: 1px;
    border: 1px solid #93b5c3;
    border-radius: 2px;
    background: #fff;
    font-size: 7px;
}
.drawing-tree {
    padding: 0 0 0 2px;
    line-height: 11px;
}
.drawing-tree li {
    display: flex;
    align-items: center;
    font-size: 7px;
    gap: 1px;
    white-space: nowrap;
}
.drawing-tree .plus {
    width: 9px;
    height: 9px;
    margin: 0 2px;
}
.model-box {
    background: linear-gradient(#dde8ec, #dde8ec) 77px 0 / 1px 100% no-repeat, #fff;
}
.model-tree {
    width: 100%;
    border-collapse: collapse;
    table-layout: fixed;
    line-height: 11px;
}
.model-tree th {
    height: 13px;
    padding: 0 0 0 4px;
    text-align: left;
    font-size: 6px;
    font-weight: normal;
    color: #000;
    background: linear-gradient(#fff, #e4edf2);
    border-bottom: 1px solid #c9d8df;
}
.model-tree th + th {
    width: 54px;
    border-left: 1px solid #c9d8df;
}
.model-tree td {
    height: 11px;
    padding: 0;
}
.model-tree td + td {
    padding-right: 26px;
    text-align: center;
}
.model-tree .root td {
    padding: 0 0 0 3px;
}
.node {
    display: flex;
    align-items: center;
    gap: 1px;
    padding-left: 4px;
    height: 11px;
}
.node svg {
    width: 11px;
    height: 11px;
}
.node .plus {
    width: 9px;
    height: 9px;
    margin-right: 2px;
}
.twig {
    align-self: stretch;
    width: 7px;
    margin: 0 0 0 4px;
    border-left: 1px dotted #b9c4ca;
    background: linear-gradient(#c9d2d7, #c9d2d7) 0 5px / 6px 1px no-repeat;
}
.tree-scroll {
    display: flex;
    margin-top: auto;
    height: 14px;
    border-top: 1px solid #dde8ec;
}
.tree-scroll span {
    display: flex;
    align-items: center;
    justify-content: space-between;
}
.scroll-a {
    width: 78px;
    padding: 0 4px 0 5px;
}
.scroll-b {
    flex: 1;
    padding: 0 4px;
}
.tree-scroll .thumb {
    width: 27px;
    justify-content: center;
}
.splitter {
    display: flex;
    flex-direction: column;
    width: 6px;
    border-left: 1px solid #c3d4de;
}
.grip-area {
    display: flex;
    align-items: flex-end;
    flex: 11;
    padding: 0 0 34px 1px;
}
.grip-rest {
    flex: 9;
}
.grip {
    display: flex;
    align-items: center;
    height: 62px;
    padding-left: 1px;
    border: 1px solid #93aab8;
    border-right: 0;
    border-radius: 3px 0 0 3px;
    background: #bfd2df;
}
.splitter .tri {
    height: 4px;
    width: 3px;
    border-width: 2px 2px 2px 0;
    border-right-color: #567;
}

/* drawing area */
.drawing {
    display: flex;
    flex-direction: column;
    flex: 1;
    min-width: 0;
}
.canvas {
    display: flex;
    flex-direction: column;
    justify-content: space-between;
    flex: 1;
    border-radius: 3px 3px 0 2px;
    background: #001130;
    padding: 150px 0 0 155px;
}
.bom {
    height: 234px;
    width: 480px;
    border-collapse: collapse;
    table-layout: fixed;
    font-size: 17px;
    line-height: 20px;
    color: #f0f032;
}
.bom td {
    padding: 0;
    border: 1px solid #b4b41e;
    text-align: center;
    white-space: nowrap;
}
.bom td:nth-child(1) {
    width: 80px;
}
.bom td:nth-child(2) {
    width: 142px;
}
.sheet-info {
    display: flex;
    gap: 14px;
    margin-left: -143px;
    font-family: Lato, "Liberation Sans", sans-serif;
    font-size: 9px;
    color: #66737f;
}
.sheet-info .scale {
    width: 63px;
}
.sheet-bar {
    display: flex;
    align-items: center;
    gap: 8px;
    height: 16px;
    padding-left: 3px;
}
.pager {
    display: flex;
}
.sheet-bar .tri {
    width: 3px;
    height: 4px;
    border-top-width: 2px;
    border-bottom-width: 2px;
}
.sheet-tab {
    margin-left: 8px;
    padding: 2px 6px;
    font-weight: bold;
    background: #c0d4e1;
    border-radius: 0 0 6px 6px;
}
.sheet-bar svg {
    margin-left: -4px;
}

/* menu manager */
.menu-manager {
    position: absolute;
    top: 128px;
    right: 24px;
    width: 83px;
    height: 48px;
    border: solid #7180d8;
    border-width: 0 2px 2px;
    border-radius: 4px 4px 0 0;
    background: #e3edf3;
}
.menu-manager h2 {
    height: 19px;
    padding: 5px 0 0 3px;
    border-radius: 3px 3px 0 0;
    background: linear-gradient(#7f90e4, #8091df);
    color: #d5defa;
    font-family: "Noto Sans", sans-serif;
}
.mm-head {
    display: flex;
    align-items: center;
    height: 11px;
    gap: 4px;
    padding-left: 5px;
    background: #2b3940;
    color: #dde4e8;
}
.mm-head .tri {
    height: 8px;
    border-width: 4px 0 4px 5px;
    border-left-color: #fff;
}
.mm-item {
    display: flex;
    align-items: center;
    justify-content: space-between;
    height: 16px;
    padding-left: 3px;
}

/* title bars */
.title-bar {
    display: flex;
    align-items: center;
    gap: 1px;
}
.title-bar h2 {
    flex: 1;
    font-family: "Noto Sans", sans-serif;
}
.close {
    display: flex;
    align-items: center;
    justify-content: center;
    width: 14px;
    height: 14px;
    border: 1px solid #fff;
    border-radius: 2px;
    background: linear-gradient(135deg, #f0906c, #d8401c);
    color: #fff;
}
.close svg {
    width: 10px;
    height: 10px;
}
.close.faded {
    border-color: #b6a0c8;
    background: #b84a60;
}

/* relations window */
.relations {
    position: absolute;
    top: 195px;
    right: 7px;
    bottom: 0;
    width: 376px;
    display: flex;
    flex-direction: column;
    border: solid #6f7edb;
    border-width: 1px 2px 2px;
    border-radius: 4px 4px 0 0;
    background: #dae7ef;
}
.relations > .title-bar {
    height: 20px;
    flex: none;
    padding: 0 0 0 1px;
    border-radius: 3px 3px 0 0;
    background: linear-gradient(#7081dc, #8fa6ec 40%, #7b92e2);
    color: #d3dffb;
}
.relations > .menu {
    height: 20px;
    flex: none;
    padding: 4px 0 0 12px;
    background: linear-gradient(#f6f9fb, #e6eff4);
}
.look-in {
    flex: none;
    height: 37px;
    margin: 0 2px 0 3px;
    padding: 0 5px;
    border: 1px solid #a3bccb;
    border-width: 1px 1px 0;
    border-radius: 3px;
    min-width: 0;
}
.look-in legend {
    height: 10px;
    line-height: 10px;
    padding: 0 3px;
    margin-left: 1px;
    font-weight: bold;
    color: #4f7da6;
}
.look-row {
    display: flex;
    align-items: center;
    gap: 4px;
    margin-top: 2px;
}
.look-row .type {
    width: 129px;
}
.look-row .btn {
    background: #d2e0ea;
}
.grow {
    flex: 1;
}
.section-bar {
    display: flex;
    align-items: center;
    flex: none;
    gap: 3px;
    height: 11px;
    margin-left: 2px;
    padding-left: 1px;
    background: #2f3d45;
    color: #d9e2e7;
}
.fold {
    border: 4px solid transparent;
    border-top: 5px solid #fff;
    border-bottom: 0;
}
.rel-tools {
    display: flex;
    flex: none;
    height: 25px;
    margin-left: 3px;
    color: #2b3338;
}
.tool-set {
    display: flex;
    align-items: center;
    padding: 0 2px;
    border: solid #8ba6b5;
    border-width: 0 1px 1px 0;
}
.rel-tools button {
    width: 19px;
    padding: 0 3px;
}
.rel-tools svg {
    width: 13px;
    height: 13px;
}
.rel-tools .off {
    color: #98a1a7;
}
.rel-tools .blue {
    color: #35508f;
}
.rel-tools .red {
    color: #b01010;
}
.rel-tools .tan {
    --board: #c9a45c;
}
.rel-tools .fx {
    font: italic bold 12px "Liberation Serif", serif;
}
.boxed {
    outline: 1px solid #c2d0d9;
    outline-offset: 3px;
}
.editor {
    display: flex;
    flex: 1 1 0;
    gap: 2px;
    min-height: 0;
    margin: 1px 3px 4px;
}
.operators {
    width: 18px;
    border-right: 1px solid #8ba6b5;
    align-self: flex-start;
}
.operators div {
    padding: 3px 0 2px;
    border-bottom: 1px solid #8ba6b5;
}
.operators button {
    display: block;
    width: 100%;
    height: 12px;
    line-height: 12px;
}
.editor textarea {
    flex: 1;
    resize: none;
    border: 1px solid #8dbdd1;
    border-radius: 1px;
    background: #fff;
}
.filter-row {
    display: flex;
    align-items: center;
    flex: none;
    gap: 3px;
    margin: 2px 7px 3px 8px;
}
.filter-row .select + label {
    margin-left: 2px;
}
.params {
    display: flex;
    flex: 1 1 0;
    min-height: 0;
    margin-left: 8px;
}
.param-box {
    display: flex;
    flex-direction: column;
    flex: 1;
    min-width: 0;
    overflow: hidden;
    border: 1px solid #93b0bf;
    border-radius: 2px;
    background: linear-gradient(#e6edf2, #e6edf2) 0 0 / 11px 100% no-repeat, #fff;
}
.param-table {
    width: 100%;
    table-layout: fixed;
    border-collapse: collapse;
    color: #98a0a5;
    white-space: nowrap;
}
.param-table th {
    height: 15px;
    padding: 0;
    background: linear-gradient(#fff, #e3ecf1);
    border-bottom: 1px solid #c5d4dc;
    color: #1f262b;
    text-align: center;
}
.param-table th.c-name {
    padding-left: 5px;
    text-align: left;
}
.param-table td {
    height: 17px;
    padding: 0 0 0 1px;
    border: solid #dfe7ec;
    border-width: 0 1px 1px 0;
}
.param-table td:first-child {
    border-color: #c5d0d8;
}
.param-table td:last-child {
    padding: 0;
    border-right: 0;
}
.param-table .current td:nth-child(2) {
    background: #a9e3e2;
    color: #23363c;
}
.c-h {
    width: 11px;
}
.c-name {
    width: 152px;
}
.c-type, .c-value, .c-des {
    width: 41px;
}
.c-acc {
    width: 43px;
}
.param-table input {
    appearance: none;
    display: block;
    width: 9px;
    height: 9px;
    margin: 0 auto;
    border: 1px solid #8fb0c4;
    background: #e6f0f6;
}
.access {
    display: flex;
    align-items: center;
    color: #23292e;
}
.access svg {
    width: 16px;
    height: 14px;
    margin-right: -2px;
}
.param-scroll {
    display: flex;
    align-items: center;
    gap: 4px;
    height: 13px;
    margin: auto 0 0 11px;
    padding: 0 4px 0 3px;
    border-top: 1px solid #dbe4e9;
    background: #fff;
}
.param-scroll .thumb {
    width: 228px;
    margin-right: auto;
}
.reorder {
    display: flex;
    flex-direction: column;
    align-items: center;
    justify-content: center;
    gap: 6px;
    width: 22px;
}
.reorder button {
    border: 5px solid transparent;
}
.reorder .up {
    border-top: 0;
    border-bottom: 10px solid #8a959c;
}
.reorder .down {
    border-bottom: 0;
    border-top: 10px solid #0b3a86;
}
.param-actions {
    display: flex;
    align-items: center;
    flex: none;
    gap: 3px;
    margin: 3px 8px 10px;
}
.props {
    width: 54px;
    margin: 0 2px 0 auto;
}
.callout-anchor {
    position: relative;
}
.callout {
    position: absolute;
    top: -11px;
    left: -12px;
    width: 29px;
    height: 38px;
    border: 4px solid #fe0000;
    border-radius: 5px;
}
.dialog-actions {
    display: flex;
    flex: none;
    justify-content: flex-end;
    gap: 9px;
    margin: 0 3px 4px;
}

/* select dialog */
.select-dialog {
    position: absolute;
    top: 178px;
    right: 15px;
    width: 95px;
    border: 2px solid #0a3fd8;
    border-top: 0;
    border-radius: 4px 4px 0 0;
    background: #e2ecf2;
}
.select-dialog .title-bar {
    height: 20px;
    padding: 0 1px;
    border-radius: 4px 4px 0 0;
    background: linear-gradient(#2a6cf4, #0a4be4 40%, #0a56f0);
    color: #fff;
}
.select-dialog p {
    padding: 1px 2px 0;
}
.select-actions {
    display: flex;
    justify-content: space-between;
    padding: 2px 5px 3px 4px;
}
.select-actions .btn {
    width: 36px;
}
```
